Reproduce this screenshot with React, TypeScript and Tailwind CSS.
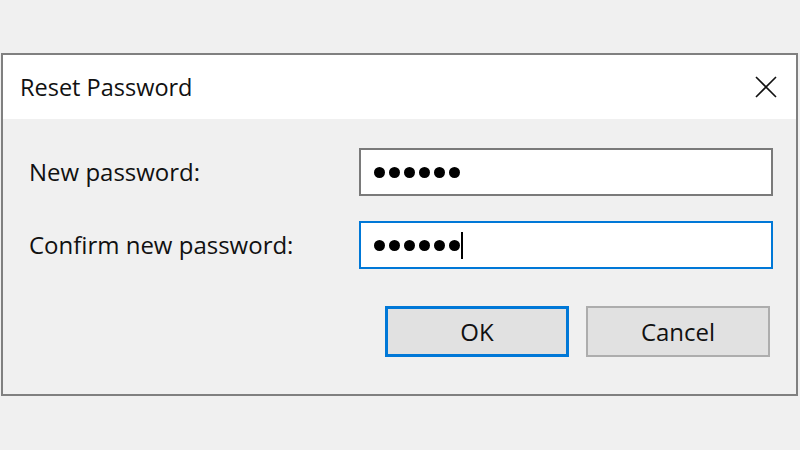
import React from "react";

const Dots = () => (
  <div className="flex items-center gap-[4px]">
    {[0, 1, 2, 3, 4, 5].map((i) => (
      <span key={i} className="block w-[11px] h-[11px] rounded-full bg-black" />
    ))}
  </div>
);

export default function App() {
  return (
    <div
      className="w-[800px] h-[450px] bg-[#f0f0f0] pt-[53px] pl-[1px] overflow-hidden"
      style={{ fontFamily: '"Open Sans", "Noto Sans", sans-serif' }}
    >
      <div className="w-[797px] h-[343px] border-2 border-[#808080] flex flex-col">
        <div className="h-[64px] bg-white flex items-center justify-between pl-[17px] pr-[17px]">
          <span className="text-[23.5px] leading-none text-[#111] pt-[2px]">Reset Password</span>
          <svg width="24" height="24" viewBox="0 0 24 24" className="mr-[1px]">
            <path d="M2 2 L22 22 M22 2 L2 22" stroke="#111" strokeWidth="1.6" fill="none" />
          </svg>
        </div>
        <div className="flex-1 bg-[#f0f0f0] pl-[26px] pr-[23px] pt-[29px]">
          <div className="flex items-center justify-between h-[48px]">
            <span className="text-[24px] leading-none text-[#111]">New password:</span>
            <div className="w-[414px] h-[48px] bg-white border-2 border-[#7a7a7a] flex items-center pl-[13px]">
              <Dots />
            </div>
          </div>
          <div className="flex items-center justify-between h-[48px] mt-[25px]">
            <span className="text-[24px] leading-none text-[#111]">Confirm new password:</span>
            <div className="w-[414px] h-[48px] bg-white border-2 border-[#0078d7] flex items-center pl-[13px]">
              <Dots />
              <span className="block w-[2px] h-[27px] bg-black ml-[1px]" />
            </div>
          </div>
          <div className="flex justify-end gap-[17px] pr-[3px] mt-[37px]">
            <div className="w-[184px] h-[51px] bg-[#e1e1e1] border-[3px] border-[#0078d7] flex items-center justify-center text-[24px] leading-none text-[#111]">
              OK
            </div>
            <div className="w-[184px] h-[51px] bg-[#e1e1e1] border-2 border-[#adadad] flex items-center justify-center text-[24px] leading-none text-[#111]">
              Cancel
            </div>
          </div>
        </div>
      </div>
    </div>
  );
}
